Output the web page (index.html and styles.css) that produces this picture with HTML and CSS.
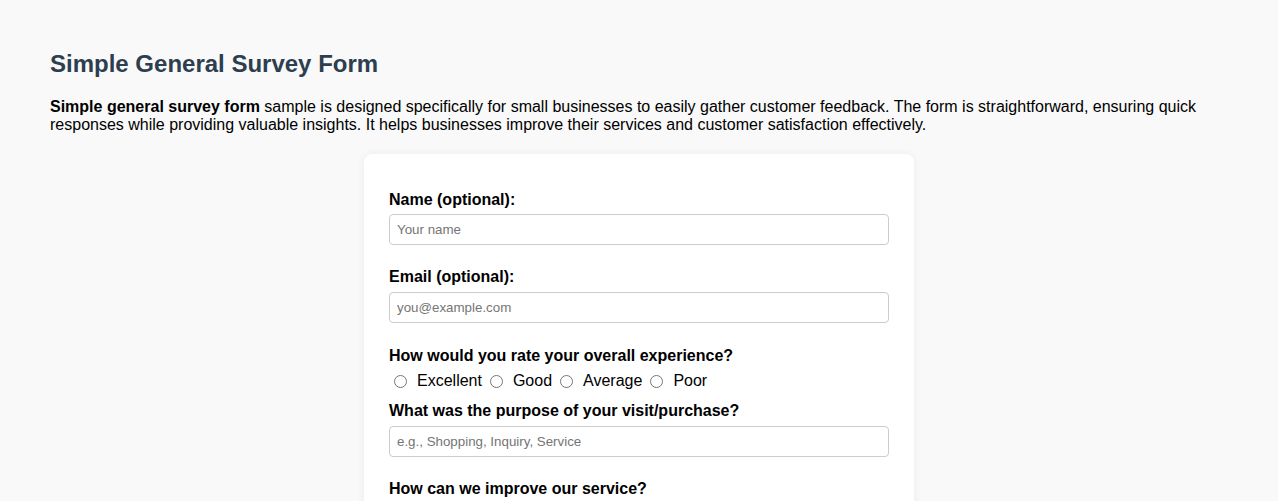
FILE: index.html
```
<!DOCTYPE html>
<html lang="en">
<head>
<meta charset="utf-8">
<title>Simple General Survey Form</title>
<link rel="stylesheet" href="styles.css">
</head>
<body>
<h2 class="title">Simple General Survey Form</h2>
<p class="intro"><strong>Simple general survey form</strong> sample is designed specifically for small businesses to easily gather customer feedback. The form is straightforward, ensuring quick responses while providing valuable insights. It helps businesses improve their services and customer satisfaction effectively.</p>
<form class="card">
  <div class="field">
    <label class="label" for="name">Name (optional):</label>
    <input class="text-input" id="name" type="text" placeholder="Your name">
  </div>
  <div class="field field-email">
    <label class="label" for="email">Email (optional):</label>
    <input class="text-input" id="email" type="email" placeholder="you@example.com">
  </div>
  <div class="field field-radio">
    <span class="label">How would you rate your overall experience?</span>
    <div class="radio-row">
      <label class="radio-opt"><input class="radio" type="radio" name="rating">Excellent</label>
      <label class="radio-opt"><input class="radio" type="radio" name="rating">Good</label>
      <label class="radio-opt"><input class="radio" type="radio" name="rating">Average</label>
      <label class="radio-opt"><input class="radio" type="radio" name="rating">Poor</label>
    </div>
  </div>
  <div class="field">
    <label class="label" for="purpose">What was the purpose of your visit/purchase?</label>
    <input class="text-input" id="purpose" type="text" placeholder="e.g., Shopping, Inquiry, Service">
  </div>
  <div class="field">
    <label class="label" for="improve">How can we improve our service?</label>
    <textarea class="text-input textarea" id="improve" rows="4" placeholder="Your suggestions"></textarea>
  </div>
</form>
</body>
</html>
```
FILE: styles.css
```
html, body {
  margin: 0;
  padding: 0;
}
body {
  background: #f9f9f9;
  font-family: "Liberation Sans", Arial, sans-serif;
  font-size: 16px;
  color: #000;
  padding: 30px 50px;
}
.title {
  font-size: 24px;
  font-weight: bold;
  color: #2c3e50;
  margin: 20px 0 20px;
  line-height: 27.6px;
}
.intro {
  margin: 0 0 20px;
  line-height: 18.4px;
}
.card {
  width: 550px;
  box-sizing: border-box;
  margin: 0 auto;
  background: #fff;
  border-radius: 8px;
  box-shadow: 0 0 8px rgba(0, 0, 0, 0.06);
  padding: 36.5px 25px 25px;
}
.field {
  margin-bottom: 23px;
}
.field-email {
  margin-bottom: 24px;
}
.field-radio {
  margin-bottom: 9px;
}
.label {
  display: block;
  font-weight: bold;
  line-height: 18.4px;
  margin-bottom: 5px;
}
.text-input {
  display: block;
  width: 100%;
  box-sizing: border-box;
  padding: 7px 7px;
  border: 1px solid #ccc;
  border-radius: 4px;
  font-family: "Liberation Sans", Arial, sans-serif;
  font-size: 13.333px;
  line-height: 15px;
  color: #000;
  background: #fff;
}
.text-input::placeholder {
  color: #757575;
}
.textarea {
  resize: vertical;
}
.radio-row {
  display: flex;
  align-items: center;
  height: 23px;
}
.radio-opt {
  display: flex;
  align-items: center;
  margin-right: 3px;
  line-height: 18.4px;
}
.radio {
  width: 13px;
  height: 13px;
  margin: 0 10px 0 5px;
}
```
